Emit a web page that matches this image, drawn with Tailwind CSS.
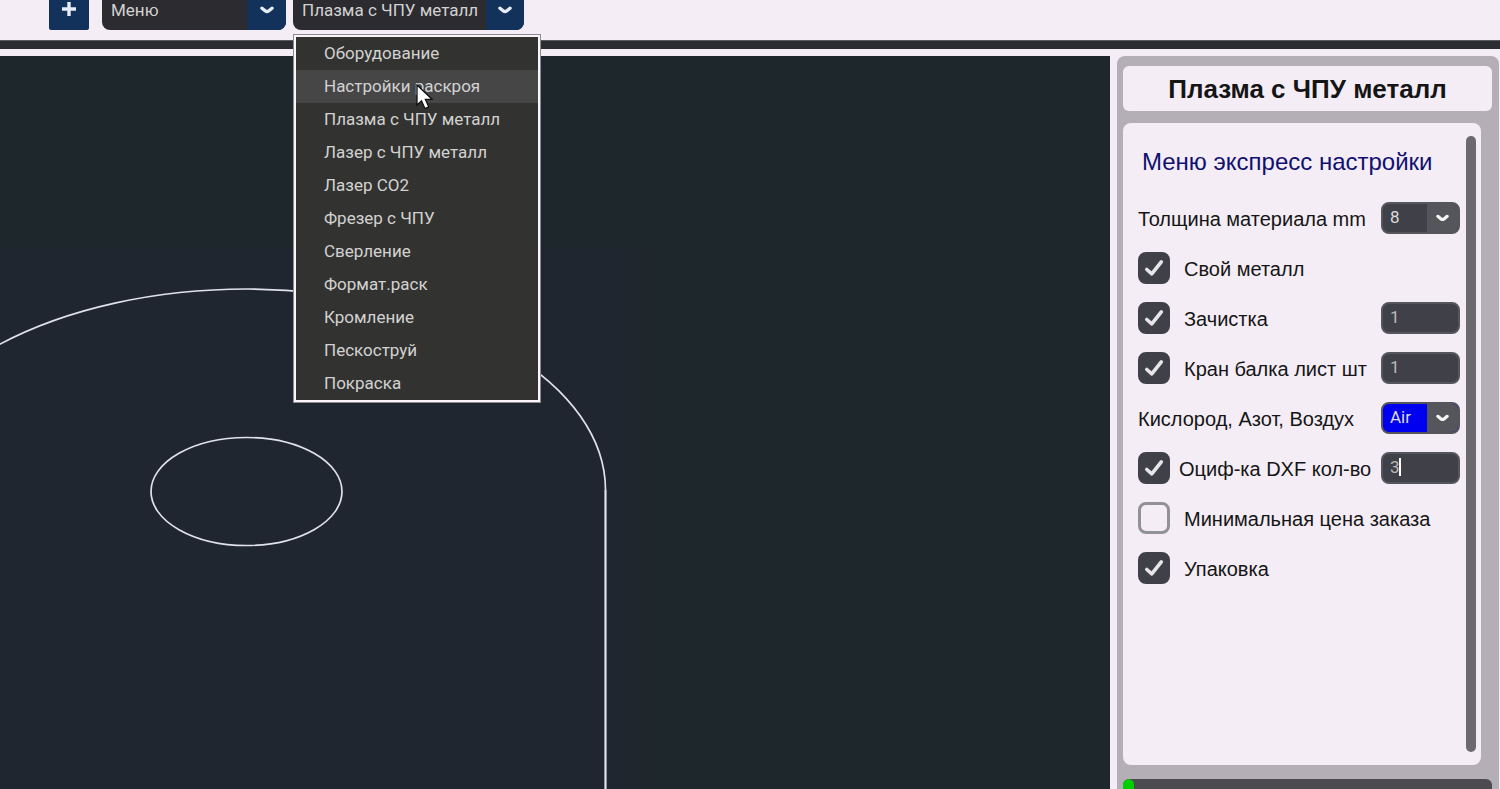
<!DOCTYPE html>
<html lang="ru">
	<head>
		<meta charset="UTF-8" />
		<meta name="viewport" content="width=device-width, initial-scale=1.0" />
		<title>Плазма с ЧПУ металл</title>
		<script src="https://cdn.jsdelivr.net/npm/@tailwindcss/browser@4"></script>
	</head>
	<body
		class="flex h-screen flex-col overflow-hidden bg-[#f4edf5] font-['Liberation_Sans',sans-serif] text-[#151515]"
	>
		<header
			class="flex h-10 shrink-0 items-start pl-[49px] font-[Roboto,sans-serif] text-[17px] text-[#d2d2d2]"
		>
			<button
				type="button"
				aria-label="Добавить"
				class="mr-[13px] flex h-[30px] w-10 justify-center rounded-b-xs bg-[#12325c] pt-[2px]"
			>
				<svg class="size-[14px]" viewBox="0 0 14 14" fill="none" stroke="#e6edf8" stroke-width="3.400">
					<path d="M7 0v14M0 7h14" />
				</svg>
			</button>
			<div class="relative mr-[7px] h-[30px] w-[184px] overflow-hidden rounded-b-lg bg-[#2b2b30]">
				<select aria-label="Меню" class="block h-5 w-full appearance-none pl-[9px] leading-5">
					<option>Меню</option>
				</select>
				<span class="pointer-events-none absolute inset-y-0 right-0 flex w-[39px] justify-center bg-[#12325c] pt-[6px]">
					<svg class="h-2 w-[14px]" viewBox="0 0 14 8" fill="none" stroke="#e6edf8" stroke-width="3.400" stroke-linecap="round" stroke-linejoin="round">
						<path d="M2 2.200L5.400 5Q7 6.200 8.600 5L12 2.200" />
					</svg>
				</span>
			</div>
			<div class="relative">
				<div class="relative h-[30px] w-[231px] overflow-hidden rounded-b-lg bg-[#2b2b30]">
					<select aria-label="Раздел" class="block h-5 w-full appearance-none pl-[9px] leading-5">
						<option>Плазма с ЧПУ металл</option>
					</select>
					<span class="pointer-events-none absolute inset-y-0 right-0 flex w-[38px] justify-center bg-[#12325c] pt-[6px]">
						<svg class="h-2 w-[14px]" viewBox="0 0 14 8" fill="none" stroke="#e6edf8" stroke-width="3.400" stroke-linecap="round" stroke-linejoin="round">
							<path d="M2 2.200L5.400 5Q7 6.200 8.600 5L12 2.200" />
						</svg>
					</span>
				</div>
				<!-- opened list -->
				<ul
					class="absolute top-[34px] left-0 z-10 w-[248px] border border-[#8f8990] bg-[#fbf5fb] p-[2px] leading-[33px] [&>li]:bg-[#323230] [&>li]:pl-7"
				>
					<li>Оборудование</li>
					<li class="bg-[#464647]!">Настройки раскроя</li>
					<li>Плазма с ЧПУ металл</li>
					<li>Лазер с ЧПУ металл</li>
					<li>Лазер CO2</li>
					<li>Фрезер с ЧПУ</li>
					<li>Сверление</li>
					<li>Формат.раск</li>
					<li>Кромление</li>
					<li>Пескоструй</li>
					<li>Покраска</li>
				</ul>
				<svg class="absolute top-[84px] left-[123px] z-20 h-[26px] w-[17px]" viewBox="0 0 17 26">
					<path d="M1 1v20l4.500-4.200 3.400 7.700 3.800-1.700-3.300-7.500H16z" fill="#fff" stroke="#111" stroke-width="1.300" />
				</svg>
			</div>
		</header>
		<div class="h-[9px] shrink-0 border-t border-[#5c5a60] bg-[#2b2c31]"></div>

		<div class="flex min-h-0 flex-1 pt-[7px] pr-px">
			<main class="min-w-0 flex-1 bg-[#1e272c]">
				<svg class="block size-full" fill="none" stroke="#dfe2ea">
					<defs>
						<linearGradient id="fade" x1="0" x2="1" y1="0" y2="0">
							<stop offset="0.94" stop-color="#202630" />
							<stop offset="1" stop-color="#202630" stop-opacity="0" />
						</linearGradient>
					</defs>
					<rect y="192" width="650" height="900" fill="url(#fade)" stroke="none" />
					<path d="M-112 434A359 201 0 0 1 247 233A358.500 201 0 0 1 605.500 434" stroke-width="1.700" />
					<path d="M605.500 434V1400" stroke-width="2.200" />
					<ellipse cx="246.500" cy="435.500" rx="95.500" ry="54" stroke-width="1.700" />
				</svg>
			</main>

			<aside class="ml-[7px] flex w-[382px] shrink-0 flex-col rounded-t-lg bg-[#b4afb6] px-[7px] pt-[10px] pl-[6px]">
				<h1 class="flex h-[45px] shrink-0 items-center justify-center rounded-md bg-[#f4edf5] pt-[2px] text-[26px] font-bold">
					Плазма с ЧПУ металл
				</h1>
				<section class="mt-3 mr-[11px] flex min-h-0 flex-1 rounded-lg bg-[#f4edf5] py-[13px] pr-[5px] pl-[15px]">
					<form class="mr-[6px] min-w-0 flex-1 text-[20px] whitespace-nowrap [&_label]:pt-[2px]">
						<h2 class="flex h-[57px] items-center pb-[6px] pl-1 text-[24px] text-[#101070]">Меню экспресс настройки</h2>
						<div class="flex h-[50px] items-center justify-between">
							<label for="thickness">Толщина материала mm</label>
							<div class="relative h-8 w-[79px] shrink-0 overflow-hidden rounded-lg border-2 border-[#55565c] bg-[#404148] font-[Roboto,sans-serif] text-[17px] text-[#dcdcdc]">
								<select id="thickness" class="block h-full w-full appearance-none pl-[7px]">
									<option>8</option>
								</select>
								<span class="pointer-events-none absolute inset-y-0 right-0 flex w-[31px] items-center justify-center bg-[#55565c]">
									<svg class="h-2 w-[13px]" viewBox="0 0 14 8" fill="none" stroke="#f4f4f4" stroke-width="3.400" stroke-linecap="round" stroke-linejoin="round">
										<path d="M2 2.200L5.400 5Q7 6.200 8.600 5L12 2.200" />
									</svg>
								</span>
							</div>
						</div>
						<div class="flex h-[50px] items-center">
							<div class="relative mr-[14px] size-8 shrink-0">
								<input id="own" type="checkbox" checked class="peer block size-8 appearance-none rounded-lg border-[3px] border-[#939198] checked:border-[#404148] checked:bg-[#404148]" />
								<svg class="pointer-events-none absolute inset-0 hidden size-8 peer-checked:block" viewBox="0 0 32 32" fill="none" stroke="#e6e6e8" stroke-width="3.600" stroke-linecap="round" stroke-linejoin="round">
									<path d="M8.800 17.500l5 4.300L23.300 9.800" />
								</svg>
							</div>
							<label for="own">Свой металл</label>
						</div>
						<div class="flex h-[50px] items-center">
							<div class="relative mr-[14px] size-8 shrink-0">
								<input id="clean" type="checkbox" checked class="peer block size-8 appearance-none rounded-lg border-[3px] border-[#939198] checked:border-[#404148] checked:bg-[#404148]" />
								<svg class="pointer-events-none absolute inset-0 hidden size-8 peer-checked:block" viewBox="0 0 32 32" fill="none" stroke="#e6e6e8" stroke-width="3.600" stroke-linecap="round" stroke-linejoin="round">
									<path d="M8.800 17.500l5 4.300L23.300 9.800" />
								</svg>
							</div>
							<label for="clean">Зачистка</label>
							<input
								type="text"
								aria-label="Зачистка, количество"
								value="1"
								class="ml-auto h-8 w-[79px] shrink-0 rounded-lg border-2 border-[#55565c] bg-[#404148] px-[7px] pb-[2px] font-[Roboto,sans-serif] text-[17px] text-[#b9b9bb]"
							/>
						</div>
						<div class="flex h-[50px] items-center">
							<div class="relative mr-[14px] size-8 shrink-0">
								<input id="crane" type="checkbox" checked class="peer block size-8 appearance-none rounded-lg border-[3px] border-[#939198] checked:border-[#404148] checked:bg-[#404148]" />
								<svg class="pointer-events-none absolute inset-0 hidden size-8 peer-checked:block" viewBox="0 0 32 32" fill="none" stroke="#e6e6e8" stroke-width="3.600" stroke-linecap="round" stroke-linejoin="round">
									<path d="M8.800 17.500l5 4.300L23.300 9.800" />
								</svg>
							</div>
							<label for="crane">Кран балка лист шт</label>
							<input
								type="text"
								aria-label="Кран балка, листов"
								value="1"
								class="ml-auto h-8 w-[79px] shrink-0 rounded-lg border-2 border-[#55565c] bg-[#404148] px-[7px] pb-[2px] font-[Roboto,sans-serif] text-[17px] text-[#b9b9bb]"
							/>
						</div>
						<div class="flex h-[50px] items-center justify-between">
							<label for="gas">Кислород, Азот, Воздух</label>
							<div class="relative h-8 w-[79px] shrink-0 overflow-hidden rounded-lg border-2 border-[#55565c] bg-[#0000f0] font-[Roboto,sans-serif] text-[17px] text-[#dcdcdc]">
								<select id="gas" class="block h-full w-full appearance-none pl-[7px]">
									<option>Air</option>
								</select>
								<span class="pointer-events-none absolute inset-y-0 right-0 flex w-[31px] items-center justify-center bg-[#55565c]">
									<svg class="h-2 w-[13px]" viewBox="0 0 14 8" fill="none" stroke="#f4f4f4" stroke-width="3.400" stroke-linecap="round" stroke-linejoin="round">
										<path d="M2 2.200L5.400 5Q7 6.200 8.600 5L12 2.200" />
									</svg>
								</span>
							</div>
						</div>
						<div class="flex h-[50px] items-center">
							<div class="relative mr-[9px] size-8 shrink-0">
								<input id="dxf" type="checkbox" checked class="peer block size-8 appearance-none rounded-lg border-[3px] border-[#939198] checked:border-[#404148] checked:bg-[#404148]" />
								<svg class="pointer-events-none absolute inset-0 hidden size-8 peer-checked:block" viewBox="0 0 32 32" fill="none" stroke="#e6e6e8" stroke-width="3.600" stroke-linecap="round" stroke-linejoin="round">
									<path d="M8.800 17.500l5 4.300L23.300 9.800" />
								</svg>
							</div>
							<label for="dxf">Оциф-ка DXF кол-во</label>
							<div class="relative ml-auto shrink-0">
								<input
									type="text"
									aria-label="Оцифровка DXF, количество"
									value="3"
									class="block h-8 w-[79px] rounded-lg border-2 border-[#55565c] bg-[#404148] px-[7px] pb-[2px] font-[Roboto,sans-serif] text-[17px] text-[#b9b9bb]"
								/>
								<span class="absolute top-[6px] left-[18px] h-[18px] w-[2px] bg-white"></span>
							</div>
						</div>
						<div class="flex h-[50px] items-center">
							<div class="relative mr-[14px] size-8 shrink-0">
								<input id="minimum" type="checkbox" class="peer block size-8 appearance-none rounded-lg border-[3px] border-[#939198] checked:border-[#404148] checked:bg-[#404148]" />
								<svg class="pointer-events-none absolute inset-0 hidden size-8 peer-checked:block" viewBox="0 0 32 32" fill="none" stroke="#e6e6e8" stroke-width="3.600" stroke-linecap="round" stroke-linejoin="round">
									<path d="M8.800 17.500l5 4.300L23.300 9.800" />
								</svg>
							</div>
							<label for="minimum">Минимальная цена заказа</label>
						</div>
						<div class="flex h-[50px] items-center">
							<div class="relative mr-[14px] size-8 shrink-0">
								<input id="packing" type="checkbox" checked class="peer block size-8 appearance-none rounded-lg border-[3px] border-[#939198] checked:border-[#404148] checked:bg-[#404148]" />
								<svg class="pointer-events-none absolute inset-0 hidden size-8 peer-checked:block" viewBox="0 0 32 32" fill="none" stroke="#e6e6e8" stroke-width="3.600" stroke-linecap="round" stroke-linejoin="round">
									<path d="M8.800 17.500l5 4.300L23.300 9.800" />
								</svg>
							</div>
							<label for="packing">Упаковка</label>
						</div>
					</form>
					<div class="w-[10px] shrink-0 rounded-full bg-[#6b686e]"></div>
				</section>
				<div
					role="progressbar"
					aria-label="Прогресс"
					aria-valuenow="3"
					class="mt-[14px] h-[10px] shrink-0 overflow-hidden rounded-t-md bg-[#4b4b50]"
				>
					<div class="h-full rounded-t-md bg-[#00d000]" style="width: 3%"></div>
				</div>
			</aside>
		</div>
	</body>
</html>
